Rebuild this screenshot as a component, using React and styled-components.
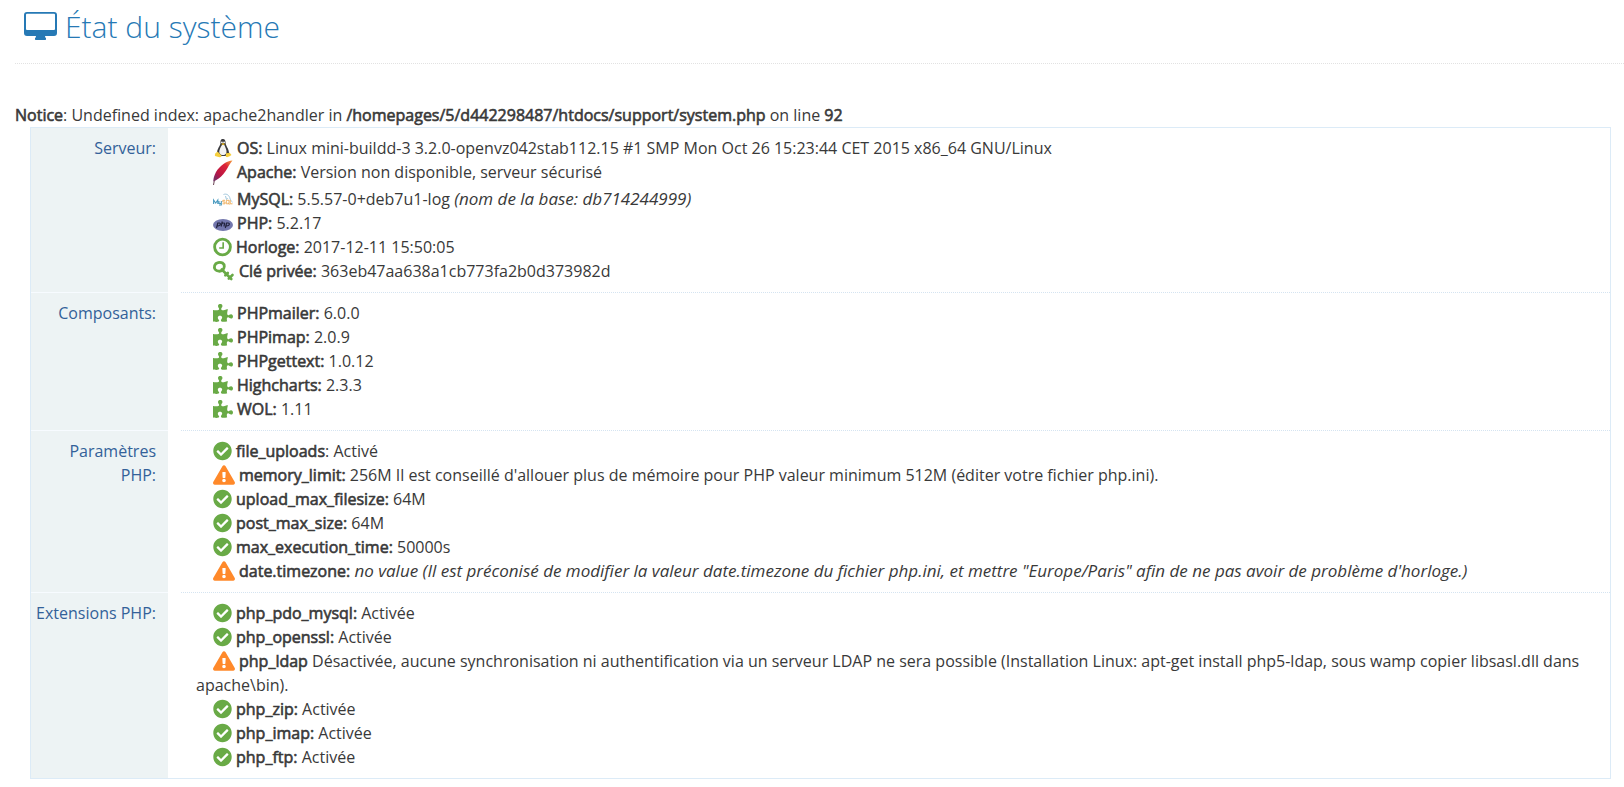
import React from 'react';
import styled, { createGlobalStyle } from 'styled-components';
import { FaCheckCircle, FaExclamationTriangle, FaPuzzlePiece } from 'react-icons/fa';

const OkIcon = () => <CheckSvg as={FaCheckCircle} />;
const WarnIcon = () => <WarnSvg as={FaExclamationTriangle} />;
const PuzzleIcon = () => <PuzzleSvg as={FaPuzzlePiece} />;

const DesktopIcon = () => (
    <DesktopSvg viewBox="0 0 33 28">
        <path fillRule="evenodd" d="M3 0H30Q33 0 33 3V21Q33 24 30 24H21Q21 25.500 22 26.300Q22.500 28 21.300 28H11.700Q10.500 28 11 26.300Q12 25.500 12 24H3Q0 24 0 21V3Q0 0 3 0ZM3 1.700Q2 1.700 2 2.700V17Q2 18 3 18H30Q31 18 31 17V2.700Q31 1.700 30 1.700Z" />
    </DesktopSvg>
);

const ClockIcon = () => (
    <CheckSvg viewBox="0 0 20 20">
        <circle cx="10" cy="10" r="8.300" fill="none" stroke="#69aa46" strokeWidth="3" />
        <path d="M10.700 5V11H6.500" fill="none" stroke="#69aa46" strokeWidth="1.700" />
    </CheckSvg>
);

const KeyIcon = () => (
    <KeySvg viewBox="0 0 22 20">
        <path d="M2.200 8.500C.5 6 1.500 2.500 5 1.600C8.500 .6 11.500 2.500 11.300 5.500C11.100 8.500 8.500 10.500 5.800 10.200C4.200 10 3 9.500 2.200 8.500Z" fill="none" stroke="#69aa46" strokeWidth="2.800" />
        <path d="M8.800 8.500L18.300 18M12.300 14.300L14.800 12M15.800 17.600L19.500 14" fill="none" stroke="#69aa46" strokeWidth="2.600" strokeLinecap="round" />
    </KeySvg>
);

const LinuxIcon = () => (
    <LogoSvg viewBox="0 0 20 20">
        <path d="M10 1C7.600 1 7.300 3 7.500 5.300C7.500 7.300 4 11 4 15C4 17.500 6.500 18 10 18S16 17.500 16 14.500C16 11 12.600 7.500 12.600 5C12.600 2.800 12 1 10 1Z" fill="#3a3a3e" />
        <path d="M9 7C7.700 8.800 6.200 12 6.200 14.300C7 17 9 17.200 11 17C13.500 16.500 13.800 14 13.300 12C12.700 9.800 12 8.500 11.300 7Z" fill="#f3f3f3" />
        <circle cx="8.900" cy="4.300" r=".9" fill="#fff" />
        <circle cx="11.100" cy="4.300" r=".9" fill="#fff" />
        <path d="M8.200 6L10 5.100L12 6L10.200 7.200Z" fill="#e9b624" />
        <path d="M4.500 13.500L8.500 17.500Q9 19.500 6.500 19.200L2 18Q1.500 17 2.300 15.500Z" fill="#f6cf3c" />
        <path d="M13.500 14.500Q15 16 16.500 14.500L18.500 17Q17 18.500 14 19.300Q12.500 19.300 12.700 17.500Z" fill="#f6cf3c" />
    </LogoSvg>
);

const ApacheIcon = () => (
    <FeatherSvg viewBox="0 0 20 26">
        <defs>
            <linearGradient id="feather" x1="1" y1="0" x2="0" y2="1">
                <stop offset="0" stopColor="#f5a33b" />
                <stop offset=".3" stopColor="#dc2339" />
                <stop offset=".65" stopColor="#bd1742" />
                <stop offset="1" stopColor="#6e2473" />
            </linearGradient>
        </defs>
        <path d="M19.500 .5C14 .5 6.500 6 3 12C1 16 .5 18 .3 21.500L2.500 20.500C6.500 18.500 9.500 15.500 12.500 11.300C15 7.500 16.800 3.500 19.500 .5Z" fill="url(#feather)" />
        <path d="M3 16.500Q1 20 .5 25" fill="none" stroke="#6b4555" strokeWidth="1" />
    </FeatherSvg>
);

const MysqlIcon = () => (
    <LogoSvg viewBox="0 0 20 20">
        <path d="M10.500 5.500C13 4.500 15.500 5.500 16.700 8.500C17.300 11 18 12 19.500 13.200M12.500 7L13.500 10.500L14.800 9.300" fill="none" stroke="#9fc6dc" strokeWidth="1" />
        <path d="M.6 15V11L2.700 14L4.800 11V15M6 12V14.500H8.300M8.300 12V16H6" fill="none" stroke="#4b9bc0" strokeWidth="1.100" />
        <path d="M12 11.300H9.800V13H12V14.800H9.500M13.300 11.300H16V14.800H13.300ZM15 13.800L16.500 15.500M17.200 11V14.800H19.500" fill="none" stroke="#efb265" strokeWidth="1" />
    </LogoSvg>
);

const PhpIcon = () => (
    <LogoSvg viewBox="0 0 20 20">
        <ellipse cx="10" cy="12" rx="10" ry="6" fill="#7377ad" />
        <path d="M3.500 15L4.800 10H6.500Q8 10.500 7 12Q6.500 13 4.500 12.800M9.300 8.500L8.100 13.500M8.900 10.500Q12 9.300 11.500 11L10.900 13.500M12.300 15L13.600 10H15.300Q17 10.500 16 12Q15.500 13 13.200 12.800" fill="none" stroke="#22233d" strokeWidth="1.200" />
    </LogoSvg>
);

const sections = [
    {
        name: 'Serveur:',
        lines: [
            { Icon: LinuxIcon, label: 'OS:', value: 'Linux mini-buildd-3 3.2.0-openvz042stab112.15 #1 SMP Mon Oct 26 15:23:44 CET 2015 x86_64 GNU/Linux' },
            { Icon: ApacheIcon, label: 'Apache:', value: 'Version non disponible, serveur sécurisé', tall: true },
            { Icon: MysqlIcon, label: 'MySQL:', value: '5.5.57-0+deb7u1-log', note: '(nom de la base: db714244999)' },
            { Icon: PhpIcon, label: 'PHP:', value: '5.2.17' },
            { Icon: ClockIcon, label: 'Horloge:', value: '2017-12-11 15:50:05' },
            { Icon: KeyIcon, label: 'Clé privée:', value: '363eb47aa638a1cb773fa2b0d373982d' },
        ],
    },
    {
        name: 'Composants:',
        lines: [
            { Icon: PuzzleIcon, label: 'PHPmailer:', value: '6.0.0' },
            { Icon: PuzzleIcon, label: 'PHPimap:', value: '2.0.9' },
            { Icon: PuzzleIcon, label: 'PHPgettext:', value: '1.0.12' },
            { Icon: PuzzleIcon, label: 'Highcharts:', value: '2.3.3' },
            { Icon: PuzzleIcon, label: 'WOL:', value: '1.11' },
        ],
    },
    {
        name: 'Paramètres PHP:',
        lines: [
            { Icon: OkIcon, label: 'file_uploads', after: ':', value: 'Activé' },
            { Icon: WarnIcon, label: 'memory_limit:', value: "256M Il est conseillé d'allouer plus de mémoire pour PHP valeur minimum 512M (éditer votre fichier php.ini)." },
            { Icon: OkIcon, label: 'upload_max_filesize:', value: '64M' },
            { Icon: OkIcon, label: 'post_max_size:', value: '64M' },
            { Icon: OkIcon, label: 'max_execution_time:', value: '50000s' },
            { Icon: WarnIcon, label: 'date.timezone:', note: 'no value (Il est préconisé de modifier la valeur date.timezone du fichier php.ini, et mettre "Europe/Paris" afin de ne pas avoir de problème d\'horloge.)' },
        ],
    },
    {
        name: 'Extensions PHP:',
        lines: [
            { Icon: OkIcon, label: 'php_pdo_mysql:', value: 'Activée' },
            { Icon: OkIcon, label: 'php_openssl:', value: 'Activée' },
            { Icon: WarnIcon, label: 'php_ldap', value: 'Désactivée, aucune synchronisation ni authentification via un serveur LDAP ne sera possible (Installation Linux: apt-get install php5-ldap, sous wamp copier libsasl.dll dans apache\\bin).' },
            { Icon: OkIcon, label: 'php_zip:', value: 'Activée' },
            { Icon: OkIcon, label: 'php_imap:', value: 'Activée' },
            { Icon: OkIcon, label: 'php_ftp:', value: 'Activée' },
        ],
    },
];

const InfoLine = ({ Icon, label, after, value, note, tall }) => {
    return (
        <Line $tall={tall}>
            <Icon /><Bold>{label}</Bold>{after}
            {value && ' ' + value}
            {note && <>{' '}<Note>{note}</Note></>}
        </Line>
    );
};

const App = () => {
    return (
        <>
            <GlobalStyle />
            <Page>
                <PageHeader>
                    <DesktopIcon />
                    <Title>État du système</Title>
                </PageHeader>
                <Notice>
                    <Bold>Notice</Bold>: Undefined index: apache2handler in{' '}
                    <Bold>/homepages/5/d442298487/htdocs/support/system.php</Bold> on line <Bold>92</Bold>
                </Notice>
                <InfoTable>
                    {
                        sections.map((section) => {
                            return (
                                <InfoRow key={section.name}>
                                    <InfoName>{section.name}</InfoName>
                                    <InfoValue>
                                        {section.lines.map((line) => <InfoLine key={line.label} {...line} />)}
                                    </InfoValue>
                                </InfoRow>
                            );
                        })
                    }
                </InfoTable>
            </Page>
        </>
    );
};

const GlobalStyle = createGlobalStyle`
    body{
        margin: 0;
        background: #fff;
        color: #393939;
        font-family: 'Open Sans', sans-serif;
        font-size: 16px;
        line-height: 24px;
    }
`

const Page = styled.main`
    padding-left: 15px;
`

const PageHeader = styled.header`
    display: flex;
    align-items: flex-start;
    gap: 8px;
    padding: 7px 9px 16px;
    border-bottom: 1px dotted #e2e2e2;
    color: #2679b5;
`

const Title = styled.h1`
    margin: 0;
    font-size: 30px;
    line-height: 40px;
    font-weight: 300;
`

const Notice = styled.p`
    margin: 39px 0 0;
`

/* regular glyphs thickened by a stroke, so the bold keeps the regular widths */
const Bold = styled.b`
    font-weight: 400;
    -webkit-text-stroke: 0.6px currentColor;
`

/* the italic face is narrower than the regular one, hence one size up */
const Note = styled.em`
    font-size: 17px;
    line-height: 20px;
`

const InfoTable = styled.dl`
    margin: 0 13px 0 15px;
    border: 1px solid #dcebf7;
`

const InfoRow = styled.div`
    display: grid;
    grid-template-columns: 137px 1fr;
    column-gap: 13px;
    &:first-child > *{
        border-top: 0;
    }
`

const InfoName = styled.dt`
    padding: 8px 12px 9px 0;
    border-top: 1px solid #f7fbff;
    background: #edf3f4;
    color: #336199;
    text-align: right;
`

const InfoValue = styled.dd`
    margin: 0;
    padding: 8px 8px 9px 15px;
    border-top: 1px dotted #d5e4f1;
`

const Line = styled.div`
    text-indent: 17px;
    padding-bottom: ${(props) => (props.$tall ? '3px' : '0')};
`

const IconSvg = styled.svg`
    width: 20px;
    height: 20px;
    margin: -4px 4px -4px 0;
    vertical-align: 0;
    overflow: visible;
`

const CheckSvg = styled(IconSvg)`
    width: 19px;
    color: #69aa46;
`

const LogoSvg = styled(IconSvg)``

const FeatherSvg = styled(LogoSvg)`
    height: 26px;
    margin: -13px 4px -13px 0;
    vertical-align: 5px;
`

const PuzzleSvg = styled(IconSvg)`
    color: #69aa46;
`

const KeySvg = styled(IconSvg)`
    width: 22px;
`

const WarnSvg = styled(IconSvg)`
    width: 22px;
    color: #ff892a;
`

const DesktopSvg = styled.svg`
    width: 33px;
    height: 28px;
    margin-top: 5px;
    fill: currentColor;
`

export default App;
